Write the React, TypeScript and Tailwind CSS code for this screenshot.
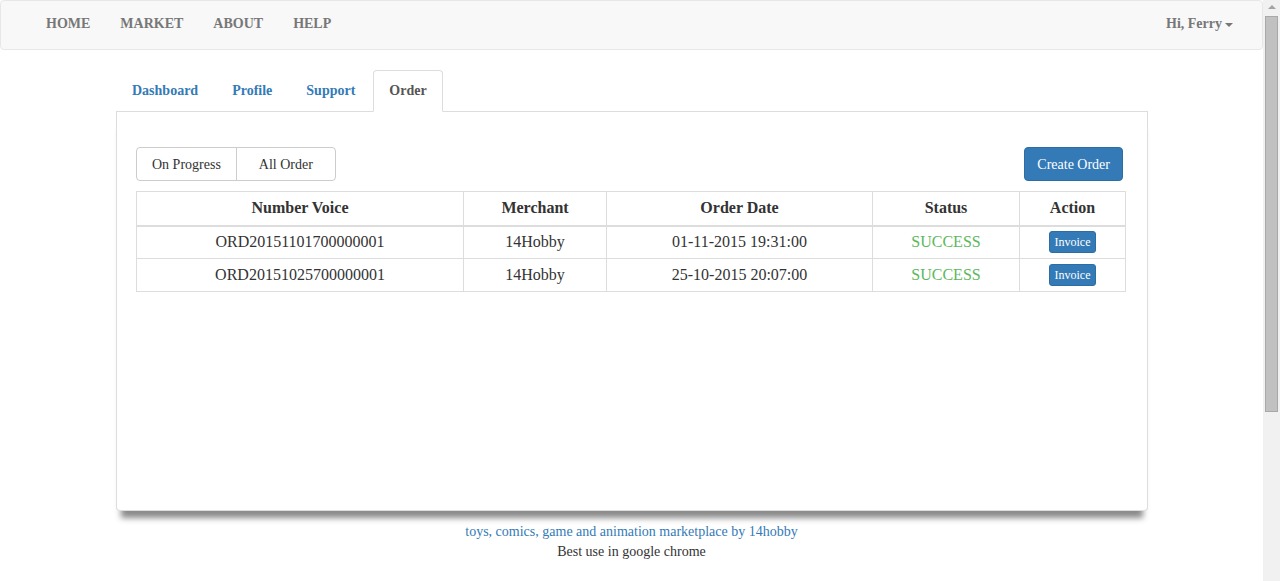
import React from "react";

const navLinks = ["HOME", "MARKET", "ABOUT", "HELP"];
const tabs = ["Dashboard", "Profile", "Support", "Order"];

const orders = [
  { number: "ORD20151101700000001", merchant: "14Hobby", date: "01-11-2015 19:31:00", status: "SUCCESS" },
  { number: "ORD20151025700000001", merchant: "14Hobby", date: "25-10-2015 20:07:00", status: "SUCCESS" },
];

const columns = [
  { label: "Number Voice", width: "w-[327px]" },
  { label: "Merchant", width: "w-[143px]" },
  { label: "Order Date", width: "w-[266px]" },
  { label: "Status", width: "w-[147px]" },
  { label: "Action", width: "w-[106px]" },
];

const Navbar = () => (
  <nav className="flex h-[50px] items-start justify-between rounded-[4px] border border-[#e7e7e7] bg-[#f8f8f8] pl-[30px] pr-[14px]">
    <ul className="flex">
      {navLinks.map((link) => (
        <li key={link}>
          <a className="block px-[15px] pt-[13px] pb-[15px] text-[14px] font-bold leading-[20px] text-[#777]">
            {link}
          </a>
        </li>
      ))}
    </ul>
    <a className="flex items-center px-[15px] pt-[13px] pb-[15px] text-[14px] font-bold leading-[20px] text-[#777]">
      Hi, Ferry
      <span className="ml-[3px] mt-[1px] h-0 w-0 border-x-[4px] border-t-[4px] border-x-transparent border-t-[#777]" />
    </a>
  </nav>
);

const Tabs = () => (
  <ul className="flex border-b border-[#ddd]">
    {tabs.map((tab) => {
      const active = tab === "Order";
      return (
        <li key={tab} className="-mb-px mr-[2px]">
          <a
            className={
              active
                ? "block rounded-t-[4px] border border-[#ddd] border-b-transparent bg-white px-[15px] py-[10px] text-[14px] font-bold leading-[20px] text-[#555]"
                : "block rounded-t-[4px] border border-transparent px-[15px] py-[10px] text-[14px] font-bold leading-[20px] text-[#337ab7]"
            }
          >
            {tab}
          </a>
        </li>
      );
    })}
  </ul>
);

const OrderTable = () => (
  <table className="w-[989px] table-fixed border-collapse text-center text-[16px] text-[#333]">
    <thead>
      <tr>
        {columns.map((col) => (
          <th
            key={col.label}
            className={`${col.width} h-[34px] border border-b-2 border-[#ddd] px-2 font-bold leading-[22px]`}
          >
            {col.label}
          </th>
        ))}
      </tr>
    </thead>
    <tbody>
      {orders.map((order) => (
        <tr key={order.number}>
          <td className="h-[33px] border border-[#ddd] px-2 leading-[22px]">{order.number}</td>
          <td className="h-[33px] border border-[#ddd] px-2 leading-[22px]">{order.merchant}</td>
          <td className="h-[33px] border border-[#ddd] px-2 leading-[22px]">{order.date}</td>
          <td className="h-[33px] border border-[#ddd] px-2 leading-[22px] text-[#5cb85c]">{order.status}</td>
          <td className="h-[33px] border border-[#ddd] px-2">
            <div className="flex justify-center">
              <button className="h-[22px] w-[47px] rounded-[3px] border border-[#2e6da4] bg-[#337ab7] text-[12px] leading-[18px] text-white">
                Invoice
              </button>
            </div>
          </td>
        </tr>
      ))}
    </tbody>
  </table>
);

const Scrollbar = () => (
  <div className="flex w-[17px] shrink-0 flex-col items-center bg-[#f1f1f1]">
    <div className="mt-[5px] h-0 w-0 border-x-[4px] border-b-[4px] border-x-transparent border-b-[#a3a3a3]" />
    <div className="mt-[7px] h-[396px] w-[13px] border border-[#a9a9a9] bg-[#c1c1c1]" />
  </div>
);

export default function App() {
  return (
    <div className="flex h-[581px] w-full overflow-hidden bg-white font-['Liberation_Serif',serif]">
      <div className="flex-1">
        <Navbar />

        <div className="ml-[116px] mt-[20px] w-[1032px]">
          <Tabs />

          {/* Order panel */}
          <div className="h-[399px] rounded-b-[4px] border border-t-0 border-[#ddd] bg-white pl-[19px] pr-[21px] pt-[35px] shadow-[0_12px_6px_-5px_#8a8a8a]">
            <div className="flex items-start justify-between">
              <div className="flex">
                <button className="h-[34px] rounded-l-[4px] border border-[#ccc] bg-white px-[15px] text-[14px] text-[#333]">
                  On Progress
                </button>
                <button className="-ml-px h-[34px] w-[100px] rounded-r-[4px] border border-[#ccc] bg-white text-[14px] text-[#333]">
                  All Order
                </button>
              </div>
              <button className="mr-[3px] h-[34px] rounded-[4px] border border-[#2e6da4] bg-[#337ab7] px-[12px] text-[14px] text-white">
                Create Order
              </button>
            </div>

            <div className="mt-[10px]">
              <OrderTable />
            </div>
          </div>
        </div>

        <footer className="mt-[11px] text-center text-[14px] leading-[20px]">
          <p className="text-[#337ab7]">toys, comics, game and animation marketplace by 14hobby</p>
          <p className="text-[#333]">Best use in google chrome</p>
        </footer>
      </div>
      <Scrollbar />
    </div>
  );
}
